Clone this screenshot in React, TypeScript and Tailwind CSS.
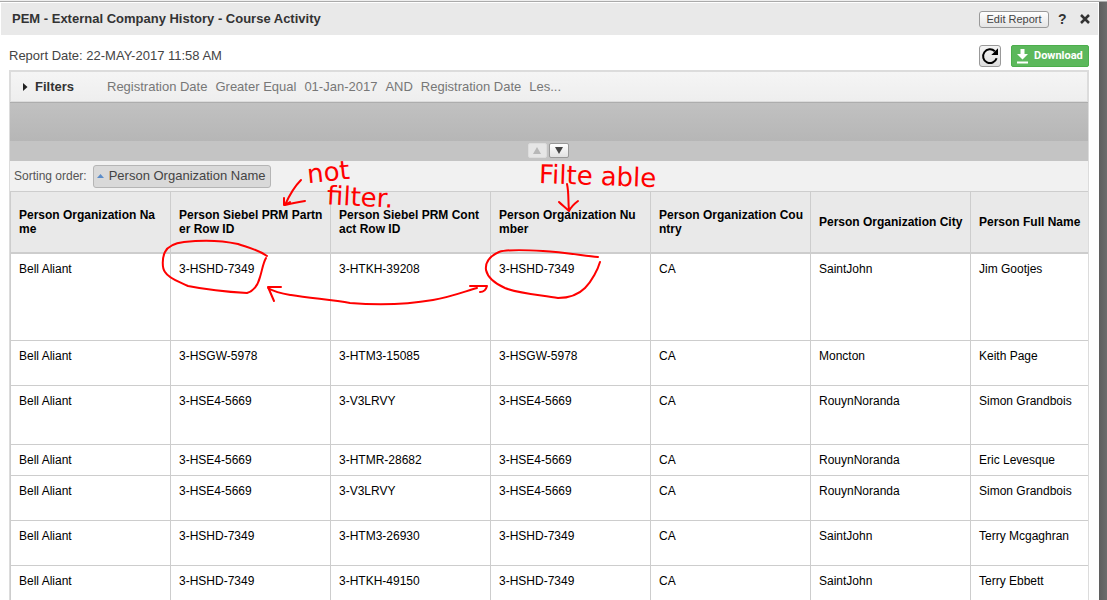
type Row = { height: string; cells: string[] };

const headers: string[][] = [
  ["Person Organization Na", "me"],
  ["Person Siebel PRM Partn", "er Row ID"],
  ["Person Siebel PRM Cont", "act Row ID"],
  ["Person Organization Nu", "mber"],
  ["Person Organization Cou", "ntry"],
  ["Person Organization City"],
  ["Person Full Name"],
];

const rows: Row[] = [
  { height: "h-[87px]", cells: ["Bell Aliant", "3-HSHD-7349", "3-HTKH-39208", "3-HSHD-7349", "CA", "SaintJohn", "Jim Gootjes"] },
  { height: "h-[45px]", cells: ["Bell Aliant", "3-HSGW-5978", "3-HTM3-15085", "3-HSGW-5978", "CA", "Moncton", "Keith Page"] },
  { height: "h-[59px]", cells: ["Bell Aliant", "3-HSE4-5669", "3-V3LRVY", "3-HSE4-5669", "CA", "RouynNoranda", "Simon Grandbois"] },
  { height: "h-[31px]", cells: ["Bell Aliant", "3-HSE4-5669", "3-HTMR-28682", "3-HSE4-5669", "CA", "RouynNoranda", "Eric Levesque"] },
  { height: "h-[45px]", cells: ["Bell Aliant", "3-HSE4-5669", "3-V3LRVY", "3-HSE4-5669", "CA", "RouynNoranda", "Simon Grandbois"] },
  { height: "h-[45px]", cells: ["Bell Aliant", "3-HSHD-7349", "3-HTM3-26930", "3-HSHD-7349", "CA", "SaintJohn", "Terry Mcgaghran"] },
  { height: "h-[45px]", cells: ["Bell Aliant", "3-HSHD-7349", "3-HTKH-49150", "3-HSHD-7349", "CA", "SaintJohn", "Terry Ebbett"] },
];

function TitleBar() {
  return (
    <header className="mr-px ml-px flex h-8 items-center bg-[#e9e9e9] pr-2 pl-[11px]">
      <h1 className="flex-1 text-[13px] leading-4 font-bold text-[#333]">
        PEM - External Company History - Course Activity
      </h1>
      <button className="h-[17px] w-[70px] rounded-[3px] border border-[#999] bg-linear-to-b from-white to-[#e4e4e4] text-[11px] leading-[14px] whitespace-nowrap text-[#444]">
        Edit Report
      </button>
      <button className="ml-[9px] w-2 text-sm font-bold text-[#333]">?</button>
      <button aria-label="Close" className="ml-[14px] text-[#333]">
        <svg viewBox="0 0 10 10" className="size-[10px]" fill="none" stroke="currentColor" strokeWidth="2.5">
          <path d="M1 1 9 9M9 1 1 9" />
        </svg>
      </button>
    </header>
  );
}

function Toolbar() {
  return (
    <div className="flex items-center pt-[10px] pb-[3px]">
      <p className="flex-1 text-[13px] leading-4 text-[#444]">Report Date: 22-MAY-2017 11:58 AM</p>
      <button
        aria-label="Refresh"
        className="flex size-[22px] items-center justify-center rounded-[3px] border border-[#999] bg-linear-to-b from-[#f4f4f4] to-[#dedede] text-black"
      >
        <svg viewBox="0 0 20 20" className="size-5 shrink-0">
          <path d="M14.8 5.2A6.9 6.9 0 1 0 16.6 12.2" fill="none" stroke="currentColor" strokeWidth="2" />
          <path d="M18 2.3V9H11.3z" fill="currentColor" />
        </svg>
      </button>
      <button className="ml-[10px] flex h-[22px] w-[78px] items-center gap-[6px] rounded-[2px] border border-[#4cae4c] bg-[#5cb85c] pl-[5px] font-[Roboto,sans-serif] text-[11px] font-bold text-white">
        <svg viewBox="0 0 11 15" className="h-[15px] w-[11px] shrink-0" fill="currentColor">
          <path d="M3.5 0h4v5H11L5.5 10.5 0 5h3.5zM0 12.5h11v2H0z" />
        </svg>
        Download
      </button>
    </div>
  );
}

function FilterBar() {
  return (
    <>
      <div className="-mx-px flex h-8 items-center border-2 border-b border-[#dcdcdc] bg-linear-to-b from-[#f5f5f5] to-[#eee] pl-3 text-[13px]">
        <svg viewBox="0 0 5 8" className="h-2 w-[5px]">
          <path d="M0 0 4.5 4 0 8z" fill="#222" />
        </svg>
        <h2 className="w-[79px] pl-[7px] font-bold text-[#333]">Filters</h2>
        <p className="flex gap-2 whitespace-nowrap text-[#777]">
          <span>Registration Date</span>
          <span>Greater Equal</span>
          <span>01-Jan-2017</span>
          <span>AND</span>
          <span>Registration Date</span>
          <span>Les...</span>
        </p>
      </div>
      <div className="h-[39px] border-t border-[#adadad] bg-linear-to-b from-[#c1c1c1] to-[#b6b6b6]" />
      <div className="flex h-5 items-start justify-center gap-[2px] bg-[#c4c4c4] pt-[2px] pr-[2px]">
        <button
          disabled
          aria-label="Move up"
          className="flex h-[15px] w-[19px] items-center justify-center rounded-[2px] border border-[#ddd] bg-[#e6e6e6]"
        >
          <svg viewBox="0 0 8 7" className="h-[7px] w-2">
            <path d="M4 0 8 7H0z" fill="#b8b8b8" />
          </svg>
        </button>
        <button
          aria-label="Move down"
          className="flex h-[15px] w-5 items-center justify-center rounded-[2px] border border-[#999] bg-linear-to-b from-white to-[#e2e2e2]"
        >
          <svg viewBox="0 0 8 7" className="h-[7px] w-2">
            <path d="M0 0H8L4 7z" fill="#444" />
          </svg>
        </button>
      </div>
      <div className="flex h-[30px] items-center gap-[6px] bg-[#f1f1f1] pl-1">
        <span className="text-xs text-[#555]">Sorting order:</span>
        <button className="flex h-[23px] items-center gap-[5px] rounded-[3px] border border-[#b5b5b5] bg-[#d9d9d9] pr-1 pl-[3px] text-[13px] whitespace-nowrap text-[#444]">
          <svg viewBox="0 0 7 4" className="h-1 w-[7px]">
            <path d="M3.5 0 7 4H0z" fill="#5b8cc9" />
          </svg>
          Person Organization Name
        </button>
      </div>
    </>
  );
}

function ReportTable() {
  return (
    <table className="w-full table-fixed border-separate border-spacing-0 border-t border-l border-[#cdcdcd] text-left text-xs leading-[14px] text-black">
      <colgroup>
        <col className="w-40" />
        <col className="w-40" />
        <col className="w-40" />
        <col className="w-40" />
        <col className="w-40" />
        <col className="w-40" />
        <col />
      </colgroup>
      <thead>
        <tr className="h-[62px] bg-[#e9e9e9]">
          {headers.map((lines) => (
            <th
              key={lines.join("")}
              className="border-r border-b-2 border-[#cdcdcd] px-2 font-bold whitespace-nowrap last:border-r-0"
            >
              {lines.map((line) => (
                <span key={line} className="block">
                  {line}
                </span>
              ))}
            </th>
          ))}
        </tr>
      </thead>
      <tbody>
        {rows.map((row, index) => (
          <tr key={index} className={row.height}>
            {row.cells.map((cell, column) => (
              <td
                key={column}
                className="border-r border-b border-[#cdcdcd] px-2 py-2 align-top last:border-r-0"
              >
                {cell}
              </td>
            ))}
          </tr>
        ))}
      </tbody>
    </table>
  );
}

function Annotations() {
  return (
    <div className="pointer-events-none absolute top-0 left-0 font-['DejaVu_Sans',sans-serif] whitespace-nowrap text-[#f00]">
      <svg
        viewBox="0 0 700 320"
        className="h-80 w-[700px]"
        fill="none"
        stroke="currentColor"
        strokeWidth="2"
        strokeLinecap="round"
        strokeLinejoin="round"
      >
        <path d="M301 180C294 187 289 196 285 205M284 198V205M285 205L290 202M285 205C293 203 299 202 305 201" />
        <path d="M267 256C257 249 246 247 238 244C220 240 201 240 184 242C175 243 168 246 165 252C162 258 162 268 165 272C169 279 180 282 188 286C208 290 229 292 247 293C253 291 258 285 260 277C262 271 263 263 266 258" />
        <path d="M281 287H268L274 301M268 288C276 293 284 294 291 295C310 298 332 300 350 303C376 305 404 305 433 300C451 297 466 291 477 288M470 286H487C486 290 483 292 480 292" />
        <path d="M598 257C580 255 561 252 543 251C527 250 508 249 499 252C490 256 485 262 486 270C488 279 496 284 505 288C520 294 542 295 558 298C568 298 578 295 585 288C592 281 598 269 600 262" />
        <path d="M567 184C569 193 568 202 569 210M559 202C562 205 566 208 569 211C571 207 574 204 578 201" />
      </svg>
      <span className="absolute top-[160px] left-[307px] -rotate-6 text-[26px] leading-6">not</span>
      <span className="absolute top-[185px] left-[327px] rotate-3 text-[26px] leading-6">filter.</span>
      <span className="absolute top-[164px] left-[539px] flex rotate-2 gap-2 text-[26px] leading-6">
        <span>Filte</span>
        <span>able</span>
      </span>
    </div>
  );
}

export default function App() {
  return (
    <div className="relative flex h-screen flex-col overflow-hidden bg-white font-['Liberation_Sans',Arial,sans-serif]">
      <div className="h-[2px] shrink-0 border-b border-[#aaa] bg-[#eee]" />
      <div className="flex min-h-0 flex-1">
        <main className="min-w-0 flex-1 pt-px">
          <TitleBar />
          <div className="pr-[10px] pl-[9px]">
            <Toolbar />
            <section className="border-x border-[#dcdcdc]">
              <FilterBar />
              <ReportTable />
            </section>
          </div>
        </main>
        <div className="w-2 shrink-0 bg-linear-to-r from-[#5e5e5e] to-[#6c6c6c]" />
      </div>
      <Annotations />
    </div>
  );
}
